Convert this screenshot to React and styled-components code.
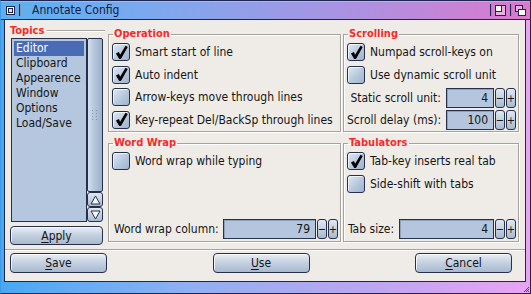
import React from 'react'
import styled, { createGlobalStyle } from 'styled-components'

const FONT = `"DejaVu Sans Condensed", "DejaVu Sans", "Liberation Sans", sans-serif`
const DARK = '#27304a'

const Global = createGlobalStyle`
  body {
    margin: 0;
    font-family: ${FONT};
    font-stretch: condensed;
    font-size: 12px;
    color: #151515;
  }
`

const Window = styled.div`
  position: relative;
  width: 531px;
  height: 294px;
  box-sizing: border-box;
  display: flex;
  flex-direction: column;
  border: 1px solid #1d2652;
  border-left-color: #3f9ae6;
  background: linear-gradient(to right, #48a8f4, #8fb0f2 35%, #bca6f0 70%, #e8a4f4);
`

const TitleBar = styled.div`
  height: 18px;
  display: flex;
  align-items: center;
  padding: 0 4px 0 4px;
  border-bottom: 1px solid #1d2652;
  background: linear-gradient(to right, #5cb0f0, #7ea8ee 30%, #b090e0 70%, #dc78cc);
  box-shadow: inset 0 1px 0 rgba(255, 255, 255, 0.25);
`

const TitleText = styled.span`
  margin-left: 8px;
  font-size: 12px;
  color: #101a3c;
  flex: 1;
`

const Divider = styled.span`
  width: 1px;
  height: 12px;
  background: #1d2652;
  border-right: 1px solid rgba(255, 255, 255, 0.5);
  margin: 0 ${({ $r }) => ($r == null ? 3 : $r)}px 0 ${({ $l }) => ($l == null ? 3 : $l)}px;
`

const Gadget = styled.svg`
  display: block;
  width: 11px;
  height: 11px;
`

const Content = styled.div`
  flex: 1;
  margin: 0 4px 11px 3px;
  border: 1px solid #1d2652;
  border-top: none;
  background: #efece8;
  display: flex;
  flex-direction: column;
  padding: 5px 6px 0 5px;
`

const Main = styled.div`
  height: 220px;
  display: flex;
  gap: 5px;
`

const TopicsColumn = styled.div`
  width: 93px;
  display: flex;
  flex-direction: column;
`

const HeaderRow = styled.div`
  height: 12px;
  display: flex;
  align-items: center;
  margin-right: -2px;
`

const Title = styled.span`
  color: #f42a2a;
  font-weight: bold;
  font-size: 11px;
  line-height: 12px;
`

const HeaderLine = styled.span`
  flex: 1;
  margin-left: 3px;
  border-top: 1px solid #a6a29d;
  border-bottom: 1px solid #fff;
`

const ListPanel = styled.div`
  flex: 1;
  margin-top: 1px;
  display: flex;
`

const ListView = styled.div`
  width: 76px;
  margin-left: 1px;
  box-sizing: border-box;
  border: 1px solid ${DARK};
  background: #b4c7de;
  padding: 2px;
`

const ListItem = styled.div`
  height: 15px;
  line-height: 15px;
  padding-left: 2px;
  font-size: 12px;
  white-space: nowrap;
  color: ${({ $active }) => ($active ? '#fff' : '#151515')};
  background: ${({ $active }) => ($active ? '#4a6cb5' : 'transparent')};
`

const ScrollBar = styled.div`
  width: 16px;
  display: flex;
  flex-direction: column;
`

const Knob = styled.div`
  flex: 1;
  box-sizing: border-box;
  border: 1px solid ${DARK};
  border-radius: 2px;
  background: linear-gradient(to right, #d3e0ef, #b3c6dd 45%, #9bb1cc);
  display: flex;
  align-items: center;
  justify-content: center;
`

const ArrowButton = styled.div`
  height: 15px;
  box-sizing: border-box;
  border: 1px solid ${DARK};
  border-radius: 3px;
  background: linear-gradient(#dfe8f2, #a9bbd1);
  display: flex;
  align-items: center;
  justify-content: center;
`

const Button = styled.div`
  height: 20px;
  box-sizing: border-box;
  width: ${({ $w }) => $w || 97}px;
  border: 1px solid ${DARK};
  border-radius: 4px;
  background: linear-gradient(#e8eef5, #c3d0e0 50%, #a9b9ce);
  box-shadow: inset 1px 1px 0 rgba(255, 255, 255, 0.8);
  display: flex;
  align-items: center;
  justify-content: center;
  font-size: 12px;
  color: #151515;
  u {
    text-decoration-thickness: 1px;
    text-underline-offset: 2px;
  }
`

const ApplyButton = styled(Button)`
  margin-top: 4px;
  height: 19px;
`

const Groups = styled.div`
  padding-top: 3px;
  display: grid;
  grid-template-columns: 233px 176px;
  grid-template-rows: 104px 105px;
  column-gap: 2px;
  row-gap: 5px;
`

const Group = styled.fieldset`
  margin: 0;
  min-width: 0;
  padding: 3px 2px 2px 3px;
  border: 1px solid #a6a29d;
  box-shadow: inset 1px 1px 0 #fff, 1px 1px 0 #fff;
  display: flex;
  flex-direction: column;
  gap: 4.5px;
`

const Legend = styled.legend`
  padding: 0 1px;
  margin-left: 1px;
  color: #f42a2a;
  font-weight: bold;
  font-size: 11px;
  line-height: 12px;
`

const CheckRow = styled.div`
  display: flex;
  align-items: center;
  gap: 5px;
  height: 18px;
  white-space: nowrap;
`

const Box = styled.div`
  width: 18px;
  height: 18px;
  flex: none;
  box-sizing: border-box;
  border: 1px solid ${DARK};
  border-radius: 3px;
  background: linear-gradient(135deg, #e0e9f4, #b7c8dd 55%, #9fb3cc);
  box-shadow: inset 1px 1px 0 rgba(255, 255, 255, 0.7);
  display: flex;
  align-items: center;
  justify-content: center;
`

const Spacer = styled.div`
  flex: 1;
`

const NumGrid = styled.div`
  display: grid;
  grid-template-columns: 94px 1fr;
  column-gap: 5px;
  row-gap: 2px;
  align-items: center;
`

const NumLabel = styled.span`
  text-align: ${({ $align }) => $align || 'left'};
  white-space: nowrap;
  margin-left: ${({ $indent }) => $indent || 0}px;
`

const NumRow = styled.div`
  display: flex;
  align-items: center;
  gap: ${({ $gap }) => $gap || 5}px;
`

const NumControl = styled.div`
  flex: 1;
  display: flex;
  gap: 1px;
  height: 20px;
`

const NumField = styled.div`
  flex: 1;
  box-sizing: border-box;
  border: 1px solid ${DARK};
  background: #b3c6dd;
  box-shadow: inset 1px 1px 0 #8ea2bc;
  text-align: right;
  padding-right: 5px;
  line-height: 18px;
  font-size: 12px;
`

const Spin = styled.div`
  width: 10px;
  box-sizing: border-box;
  border: 1px solid ${DARK};
  border-radius: 3px;
  background: linear-gradient(#e0e8f2, #a8bad0);
  display: flex;
  align-items: center;
  justify-content: center;
  font-size: 11px;
  line-height: 1;
`

const Separator = styled.div`
  margin-top: 4px;
  margin-left: -5px;
  margin-right: -6px;
  border-top: 1px solid #a6a29d;
  border-bottom: 1px solid #fff;
`

const ButtonRow = styled.div`
  margin-top: 2px;
  width: 502px;
  display: flex;
  justify-content: space-between;
`

const Grip = styled.svg`
  position: absolute;
  right: 0;
  bottom: 0;
  width: 7px;
  height: 7px;
`

function Check() {
  return (
    <svg width="15" height="15" viewBox="0 0 14 14">
      <path d="M1.8 8 L4.6 6.6 L5.7 9.2 L10.8 0.8 L12.8 1.9 L6.5 13 L4.9 13 Z" fill="#000" />
    </svg>
  )
}

function CheckBox({ checked, label }) {
  return (
    <CheckRow>
      <Box>{checked && <Check />}</Box>
      <span>{label}</span>
    </CheckRow>
  )
}

function NumberInput({ value }) {
  return (
    <NumControl>
      <NumField>{value}</NumField>
      <Spin>−</Spin>
      <Spin>+</Spin>
    </NumControl>
  )
}

function Arrow({ up }) {
  return (
    <svg width="11" height="10" viewBox="0 0 11 10">
      <path
        d={up ? 'M5.5 1 L10 9 L1 9 Z' : 'M1 1 L10 1 L5.5 9 Z'}
        fill="#f4f6fa"
        stroke={DARK}
        strokeWidth="1"
        strokeLinejoin="round"
      />
    </svg>
  )
}

const topics = ['Editor', 'Clipboard', 'Appearence', 'Window', 'Options', 'Load/Save']

export default function App() {
  return (
    <>
      <Global />
      <Window>
        <TitleBar>
          <Gadget viewBox="0 0 11 11">
            <rect x="1.5" y="1.5" width="8" height="8" fill="#fff" stroke="#1d2652" />
            <rect x="3.5" y="3.5" width="4" height="4" fill="#dfe4ee" stroke="#1d2652" />
          </Gadget>
          <Divider $l={3} />
          <TitleText>Annotate Config</TitleText>
          <Divider />
          <Gadget viewBox="0 0 11 11">
            <rect x="0.5" y="0.5" width="10" height="10" fill="#e9b0e4" stroke="#1d2652" />
            <rect x="0.5" y="0.5" width="6" height="6" fill="#fff" stroke="#1d2652" />
          </Gadget>
          <Divider $l={4} />
          <Gadget viewBox="0 0 11 11">
            <rect x="0.5" y="0.5" width="7" height="6" fill="#e9b0e4" stroke="#1d2652" />
            <rect x="3.5" y="4.5" width="7" height="6" fill="#fff" stroke="#1d2652" />
          </Gadget>
        </TitleBar>
        <Content>
          <Main>
            <TopicsColumn>
              <HeaderRow>
                <Title>Topics</Title>
                <HeaderLine />
              </HeaderRow>
              <ListPanel>
                <ListView>
                  {topics.map((t, i) => (
                    <ListItem key={t} $active={i === 0}>{t}</ListItem>
                  ))}
                </ListView>
                <ScrollBar>
                  <Knob>
                    <svg width="6" height="11" viewBox="0 0 6 11">
                      {[0, 3, 6, 9].map((y) => (
                        <g key={y}>
                          <rect x="0" y={y} width="1" height="1" fill="#8398b4" />
                          <rect x="4" y={y} width="1" height="1" fill="#8398b4" />
                        </g>
                      ))}
                    </svg>
                  </Knob>
                  <ArrowButton><Arrow up /></ArrowButton>
                  <ArrowButton><Arrow /></ArrowButton>
                </ScrollBar>
              </ListPanel>
              <ApplyButton $w={93}><span><u>A</u>pply</span></ApplyButton>
            </TopicsColumn>
            <Groups>
              <Group>
                <Legend>Operation</Legend>
                <CheckBox checked label="Smart start of line" />
                <CheckBox checked label="Auto indent" />
                <CheckBox label="Arrow-keys move through lines" />
                <CheckBox checked label="Key-repeat Del/BackSp through lines" />
              </Group>
              <Group>
                <Legend>Scrolling</Legend>
                <CheckBox checked label="Numpad scroll-keys on" />
                <CheckBox label="Use dynamic scroll unit" />
                <NumGrid>
                  <NumLabel $align="right">Static scroll unit:</NumLabel>
                  <NumberInput value="4" />
                  <NumLabel $align="right">Scroll delay (ms):</NumLabel>
                  <NumberInput value="100" />
                </NumGrid>
              </Group>
              <Group>
                <Legend>Word Wrap</Legend>
                <CheckBox label="Word wrap while typing" />
                <Spacer />
                <NumRow $gap={4}>
                  <NumLabel $indent={2}>Word wrap column:</NumLabel>
                  <NumberInput value="79" />
                </NumRow>
              </Group>
              <Group>
                <Legend>Tabulators</Legend>
                <CheckBox checked label="Tab-key inserts real tab" />
                <CheckBox label="Side-shift with tabs" />
                <Spacer />
                <NumRow $gap={5}>
                  <NumLabel $indent={1}>Tab size:</NumLabel>
                  <NumberInput value="4" />
                </NumRow>
              </Group>
            </Groups>
          </Main>
          <Separator />
          <ButtonRow>
            <Button><span><u>S</u>ave</span></Button>
            <Button><span><u>U</u>se</span></Button>
            <Button><span><u>C</u>ancel</span></Button>
          </ButtonRow>
        </Content>
        <Grip viewBox="0 0 7 7">
          <path d="M6 1 L1 6 M6 3 L3 6 M6 5 L5 6" stroke="#2a2f55" strokeWidth="0.8" />
        </Grip>
      </Window>
    </>
  )
}
